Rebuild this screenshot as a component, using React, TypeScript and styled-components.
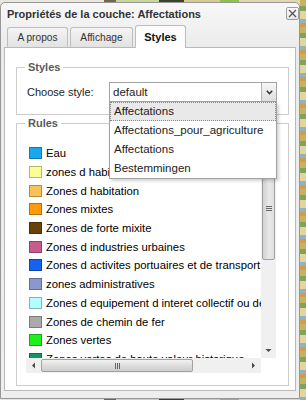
import React from 'react';
import styled, { createGlobalStyle } from 'styled-components';

const GlobalStyle = createGlobalStyle`
  html, body { margin: 0; padding: 0; }
  body {
    width: 306px;
    height: 400px;
    overflow: hidden;
    font-family: "Liberation Sans", Arial, sans-serif;
    background:
      repeating-linear-gradient(180deg, #c8b25e 0 6px, #7fa35a 6px 11px, #e3d59c 11px 19px, #8db4c4 19px 23px, #d59a4a 23px 27px) right top / 6px 100% no-repeat,
      linear-gradient(90deg, #e9e6dc 0 34%, #6d6a4c 34% 38%, #c9d79c 38% 52%, #39462a 52% 60%, #d9ca8f 60% 72%, #8cc34b 72% 78%, #e1d7b1 78% 100%);
  }
  #root { height: 100%; }
`;

const Window = styled.div`
  box-sizing: border-box;
  width: 300px;
  height: 397px;
  margin-top: 2px;
  border: 1px solid #979797;
  border-radius: 5px 5px 0 0;
  background: linear-gradient(#f7f7f7, #ebebeb 46px, #eeeeee);
  display: flex;
  flex-direction: column;
`;

const Header = styled.div`
  height: 21px;
  display: flex;
  align-items: center;
  justify-content: space-between;
  padding: 0 0 0 6px;
`;

const Title = styled.div`
  font-size: 11px;
  font-weight: bold;
  color: #333;
`;

const CloseButton = styled.div`
  box-sizing: border-box;
  width: 13px;
  height: 13px;
  border: 1px solid #9d9d9d;
  border-radius: 2px;
  background: linear-gradient(#ffffff, #e6e6e6);
  display: flex;
  align-items: center;
  justify-content: center;
`;

const TabStrip = styled.div`
  height: 24px;
  box-sizing: border-box;
  margin: 0 3px;
  padding-left: 3px;
  border-bottom: 1px solid #b9b9b9;
  display: flex;
  align-items: flex-end;
  gap: 2px;
`;

const Tab = styled.div<{ $w: number; $active?: boolean }>`
  box-sizing: border-box;
  width: ${(p) => p.$w}px;
  height: ${(p) => (p.$active ? 23 : 20)}px;
  margin-bottom: ${(p) => (p.$active ? -1 : 0)}px;
  border: 1px solid #bdbdbd;
  border-bottom: none;
  border-radius: 3px 3px 0 0;
  background: ${(p) =>
    p.$active ? 'linear-gradient(#fbfbfb, #ffffff)' : 'linear-gradient(#f4f4f4, #e2e2e2)'};
  display: flex;
  align-items: center;
  justify-content: center;
  font-size: ${(p) => (p.$active ? 11 : 10.2)}px;
  font-weight: ${(p) => (p.$active ? 'bold' : 'normal')};
  color: ${(p) => (p.$active ? '#111' : '#333')};
`;

const Body = styled.div`
  flex: 1;
  margin: 0 3px 7px;
  background: #ffffff;
  border: 1px solid #b9b9b9;
  border-top: none;
  padding: 19px 6px 0 11px;
`;

const Group = styled.div<{ $pad: string; $height: number; $mt?: number }>`
  position: relative;
  box-sizing: border-box;
  height: ${(p) => p.$height}px;
  margin-top: ${(p) => p.$mt ?? 0}px;
  border: 1px solid #cdcdcd;
  padding: ${(p) => p.$pad};
`;

const Legend = styled.span`
  position: absolute;
  top: -7px;
  left: 8px;
  padding: 0 3px;
  background: #fff;
  font-size: 11px;
  line-height: 13px;
  font-weight: bold;
  color: #5a5a5a;
`;

const FieldRow = styled.div`
  display: flex;
  align-items: center;
  justify-content: space-between;
`;

const Label = styled.span`
  font-size: 11px;
  color: #222;
`;

const Select = styled.div`
  position: relative;
  box-sizing: border-box;
  width: 168px;
  height: 20px;
  border: 1px solid #a3a3a3;
  background: #fff;
  display: flex;
  align-items: stretch;
`;

const SelectValue = styled.div`
  flex: 1;
  padding-left: 3px;
  font-size: 11.5px;
  line-height: 18px;
  color: #222;
`;

const SelectArrow = styled.div`
  width: 14px;
  border-left: 1px solid #b5b5b5;
  background: linear-gradient(#f6f6f6, #dedede);
  display: flex;
  align-items: center;
  justify-content: center;
`;

const Dropdown = styled.div`
  position: absolute;
  z-index: 5;
  top: 19px;
  left: -1px;
  width: 168px;
  box-sizing: border-box;
  background: #fff;
  border: 1px solid #a0a0a0;
  border-top: none;
  box-shadow: 2px 2px 3px rgba(0, 0, 0, 0.18);
`;

const Option = styled.div<{ $active?: boolean }>`
  box-sizing: border-box;
  height: 19px;
  padding-left: 3px;
  font-size: 11.5px;
  line-height: 17px;
  color: #222;
  white-space: nowrap;
  border: 1px ${(p) => (p.$active ? 'dotted #8a8a8a' : 'solid transparent')};
  background: ${(p) => (p.$active ? '#e9e9e9' : '#fff')};
`;

const ListBox = styled.div`
  height: 232px;
  display: grid;
  grid-template-columns: 1fr 15px;
  grid-template-rows: 1fr 15px;
`;

const Viewport = styled.div`
  overflow: hidden;
  padding-top: 3px;
`;

const Row = styled.div`
  height: 18.7px;
  display: flex;
  align-items: center;
  gap: 4px;
  padding-left: 3px;
  white-space: nowrap;
  font-size: 11.3px;
  color: #000;
`;

const Swatch = styled.span<{ $color: string }>`
  flex: none;
  box-sizing: border-box;
  width: 13px;
  height: 12px;
  background: ${(p) => p.$color};
  border: 1px solid rgba(0, 0, 0, 0.28);
`;

const VScroll = styled.div`
  display: flex;
  flex-direction: column;
  background: #f0f0f0;
`;

const HScroll = styled.div`
  display: flex;
  background: #f0f0f0;
`;

const ScrollButton = styled.div`
  flex: none;
  width: 15px;
  height: 15px;
  display: flex;
  align-items: center;
  justify-content: center;
`;

const VThumb = styled.div`
  flex: none;
  box-sizing: border-box;
  height: 104px;
  margin: 0 1px;
  border: 1px solid #a2a2a2;
  border-radius: 2px;
  background: linear-gradient(90deg, #d0d0d0, #e9e9e9 55%, #dddddd);
  display: flex;
  align-items: center;
  justify-content: center;
`;

const HThumb = styled.div`
  flex: none;
  box-sizing: border-box;
  width: 152px;
  margin: 1px 0;
  border: 1px solid #a2a2a2;
  border-radius: 2px;
  background: linear-gradient(#f2f2f2, #dcdcdc 55%, #cdcdcd);
  display: flex;
  align-items: center;
  justify-content: center;
`;

const Track = styled.div`
  flex: 1;
`;

const Corner = styled.div`
  background: #fff;
`;

const rules: [string, string][] = [
  ['#1aa8ec', 'Eau'],
  ['#fdfd98', 'zones d habitation'],
  ['#f9c256', 'Zones d habitation'],
  ['#ff9a0a', 'Zones mixtes'],
  ['#6a4208', 'Zones de forte mixite'],
  ['#c95a8c', 'Zones d industries urbaines'],
  ['#1462ee', 'Zones d activites portuaires et de transport'],
  ['#8b98cf', 'zones administratives'],
  ['#b2fdfd', 'Zones d equipement d interet collectif ou de services publics'],
  ['#ababab', 'Zones de chemin de fer'],
  ['#1df01d', 'Zones vertes'],
  ['#119862', 'Zones vertes de haute valeur historique'],
];

const options = ['Affectations', 'Affectations_pour_agriculture', 'Affectations', 'Bestemmingen'];

const Tri = ({ dir }: { dir: 'up' | 'down' | 'left' | 'right' }) => {
  const pts = {
    up: '0.5,4 3.5,1 6.5,4',
    down: '0.5,1 3.5,4 6.5,1',
    left: '4,0.5 1,3.5 4,6.5',
    right: '1,0.5 4,3.5 1,6.5',
  }[dir];
  const vertical = dir === 'up' || dir === 'down';
  return (
    <svg width={vertical ? 7 : 5} height={vertical ? 5 : 7} viewBox={vertical ? '0 0 7 5' : '0 0 5 7'}>
      <polygon points={pts} fill="#4a4a4a" />
    </svg>
  );
};

export default function App() {
  return (
    <>
      <GlobalStyle />
      <Window>
        <Header>
          <Title>Propriétés de la couche: Affectations</Title>
          <CloseButton>
            <svg width="9" height="9" viewBox="0 0 9 9">
              <path d="M1 1 L8 8 M8 1 L1 8" stroke="#555" strokeWidth="1.3" />
            </svg>
          </CloseButton>
        </Header>
        <TabStrip>
          <Tab $w={61}>A propos</Tab>
          <Tab $w={63}>Affichage</Tab>
          <Tab $w={51} $active>
            Styles
          </Tab>
        </TabStrip>
        <Body>
          <Group $height={48} $pad="14px 11px 12px 10px">
            <Legend>Styles</Legend>
            <FieldRow>
              <Label>Choose style:</Label>
              <Select>
                <SelectValue>default</SelectValue>
                <SelectArrow>
                  <svg width="7" height="5" viewBox="0 0 7 5">
                    <polyline points="0.8,0.8 3.5,3.6 6.2,0.8" fill="none" stroke="#333" strokeWidth="1.5" />
                  </svg>
                </SelectArrow>
                <Dropdown>
                  {options.map((o, i) => (
                    <Option key={i} $active={i === 0}>
                      {o}
                    </Option>
                  ))}
                </Dropdown>
              </Select>
            </FieldRow>
          </Group>
          <Group $height={263} $mt={8} $pad="17px 12px 11px 9px">
            <Legend>Rules</Legend>
            <ListBox>
              <Viewport>
                {rules.map(([c, t], i) => (
                  <Row key={i}>
                    <Swatch $color={c} />
                    {t}
                  </Row>
                ))}
              </Viewport>
              <VScroll>
                <ScrollButton>
                  <Tri dir="up" />
                </ScrollButton>
                <VThumb>
                  <svg width="6" height="5" viewBox="0 0 6 5">
                    <path d="M0 0.5 H6 M0 2.5 H6 M0 4.5 H6" stroke="#666" strokeWidth="1" />
                  </svg>
                </VThumb>
                <Track />
                <ScrollButton>
                  <Tri dir="down" />
                </ScrollButton>
              </VScroll>
              <HScroll>
                <ScrollButton>
                  <Tri dir="left" />
                </ScrollButton>
                <HThumb>
                  <svg width="5" height="6" viewBox="0 0 5 6">
                    <path d="M0.5 0 V6 M2.5 0 V6 M4.5 0 V6" stroke="#666" strokeWidth="1" />
                  </svg>
                </HThumb>
                <Track />
                <ScrollButton>
                  <Tri dir="right" />
                </ScrollButton>
              </HScroll>
              <Corner />
            </ListBox>
          </Group>
        </Body>
      </Window>
    </>
  );
}
